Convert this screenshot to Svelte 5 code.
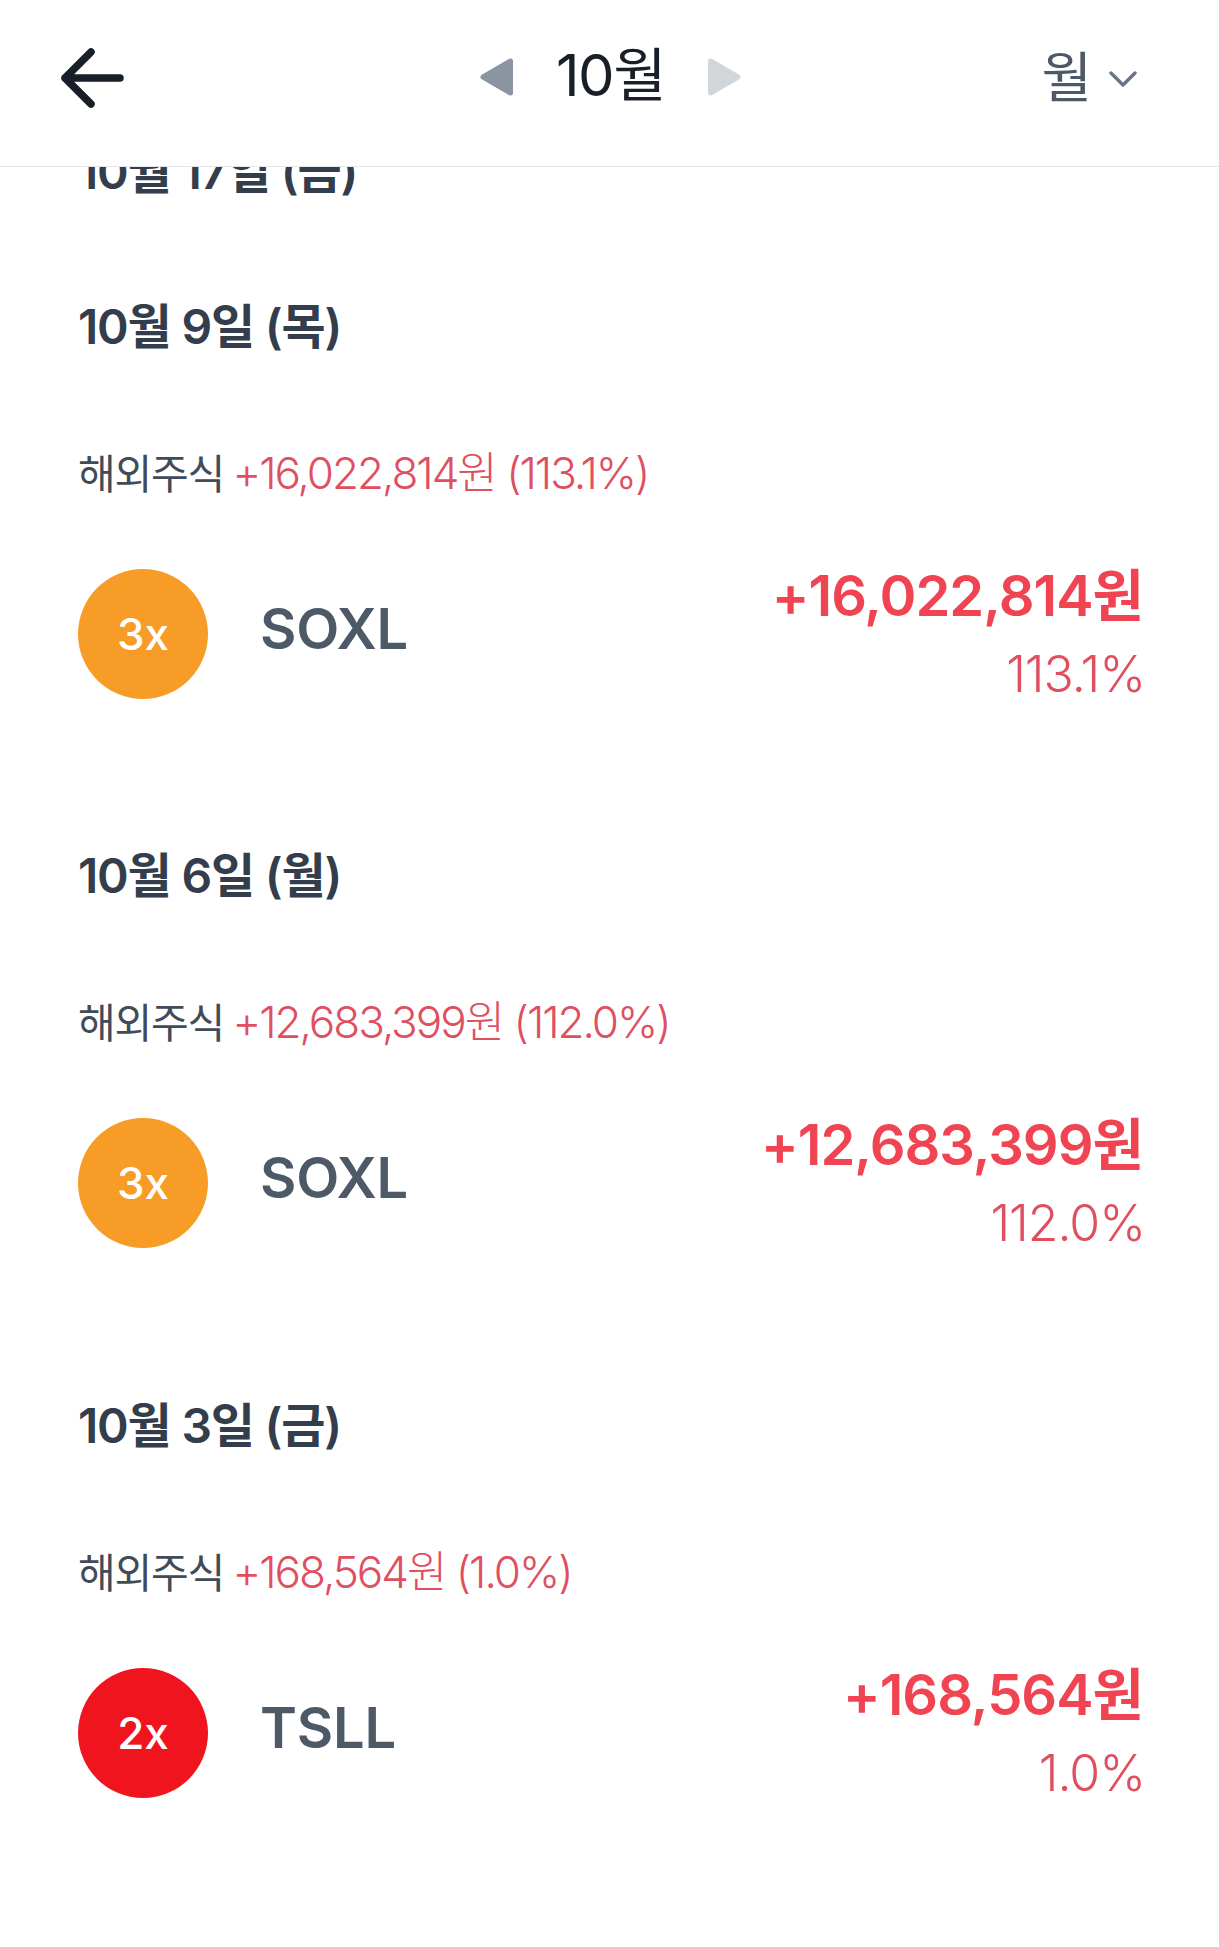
<script>
  const days = [
    { date: '10월 9일 (목)', sum: '+16,022,814원 (113.1%)', lev: '3x', color: 'orange', name: 'SOXL', amount: '+16,022,814원', pct: '113.1%' },
    { date: '10월 6일 (월)', sum: '+12,683,399원 (112.0%)', lev: '3x', color: 'orange', name: 'SOXL', amount: '+12,683,399원', pct: '112.0%' },
    { date: '10월 3일 (금)', sum: '+168,564원 (1.0%)', lev: '2x', color: 'red', name: 'TSLL', amount: '+168,564원', pct: '1.0%' }
  ];
</script>

<div class="page">
  <header class="bar">
    <svg class="back" width="66" height="60" viewBox="0 0 66 60" fill="none" stroke="#191f28" stroke-width="7.5" stroke-linecap="round" stroke-linejoin="round">
      <path d="M60 30H5M31 4 5 30l26 26" />
    </svg>
    <div class="month">
      <svg width="34" height="38" viewBox="0 0 34 38"><path d="M30.500 3v32L3 19z" fill="#8b95a1" stroke="#8b95a1" stroke-width="5" stroke-linejoin="round" /></svg>
      <span class="title">10월</span>
      <svg width="34" height="38" viewBox="0 0 34 38"><path d="M3.500 3v32L31 19z" fill="#d1d6db" stroke="#d1d6db" stroke-width="5" stroke-linejoin="round" /></svg>
    </div>
    <div class="mode">
      <span class="mode-label">월</span>
      <svg class="chev" width="28" height="18" viewBox="0 0 28 18" fill="none" stroke="#6b7684" stroke-width="3.400" stroke-linecap="round" stroke-linejoin="round"><path d="M2 3l12 12L26 3" /></svg>
    </div>
  </header>
  <div class="list">
    <h2 class="date first">10월 17일 (금)</h2>
    {#each days as d}
      <section class="day">
        <h2 class="date">{d.date}</h2>
        <p class="sum"><span class="label">해외주식</span> <span class="up">{d.sum}</span></p>
        <div class="row">
          <div class="badge {d.color}">{d.lev}</div>
          <div class="name">{d.name}</div>
          <div class="vals">
            <div class="amount">{d.amount}</div>
            <div class="pct">{d.pct}</div>
          </div>
        </div>
      </section>
    {/each}
  </div>
</div>

<style>
  :global(body) { margin: 0; background: #fff; }
  .page {
    width: 1219px;
    height: 1947px;
    overflow: hidden;
    background: #fff;
    font-family: Inter, "Noto Sans CJK KR", sans-serif;
  }
  .bar {
    position: relative;
    z-index: 1;
    box-sizing: border-box;
    height: 167px;
    border-bottom: 1px solid #e5e8eb;
    background: #fff;
    display: flex;
    align-items: center;
    justify-content: space-between;
    padding: 0 82px 0 60px;
  }
  .back { margin-top: -10px; }
  .month {
    position: absolute;
    left: 480px;
    top: 47px;
    display: flex;
    align-items: center;
    gap: 42px;
  }
  .title { font-size: 58px; font-weight: 400; color: #191f28; letter-spacing: -1.5px; line-height: 62px; margin-top: -3px; }
  .mode { display: flex; align-items: center; gap: 17px; font-size: 55px; color: #4e5968; }
  .mode-label { margin-top: -20px; }
  .chev { margin-top: -9px; }
  .list { height: 1780px; overflow: hidden; }
  .date { margin: 0; font-size: 48px; font-weight: 600; line-height: 56px; color: #333d4b; letter-spacing: -1.2px; }
  .first { margin: -23px 0 0 78px; }
  .day { padding: 0 78px; height: 549.4px; box-sizing: border-box; }
  .list > .first + .day { margin-top: 99px; }
  .sum { margin: 92px 0 0; font-size: 44px; line-height: 52px; letter-spacing: -2px; font-weight: 300; white-space: nowrap; }
  .label { font-size: 41px; letter-spacing: -1.2px; color: #414b58; font-weight: 400; margin-right: -2px; }
  .up { color: #e04f5f; }
  .row { margin-top: 69px; display: flex; align-items: center; height: 130px; }
  .badge {
    width: 130px; height: 130px; border-radius: 50%;
    color: #fff; font-size: 44px; font-weight: 500;
    display: flex; align-items: center; justify-content: center;
  }
  .orange { background: #f79c26; }
  .red { background: #f0141f; }
  .name { margin-left: 52px; font-size: 56px; font-weight: 600; color: #4e5968; flex: 1; padding-bottom: 10px; letter-spacing: -0.2px; }
  .vals { text-align: right; margin-right: -2px; padding-top: 2px; }
  .amount { font-size: 56px; font-weight: 600; line-height: 78px; color: #f04452; letter-spacing: -1px; }
  .pct { font-size: 50px; font-weight: 300; line-height: 78px; color: #e04f5f; letter-spacing: -1px; margin-right: -2px; }
</style>
